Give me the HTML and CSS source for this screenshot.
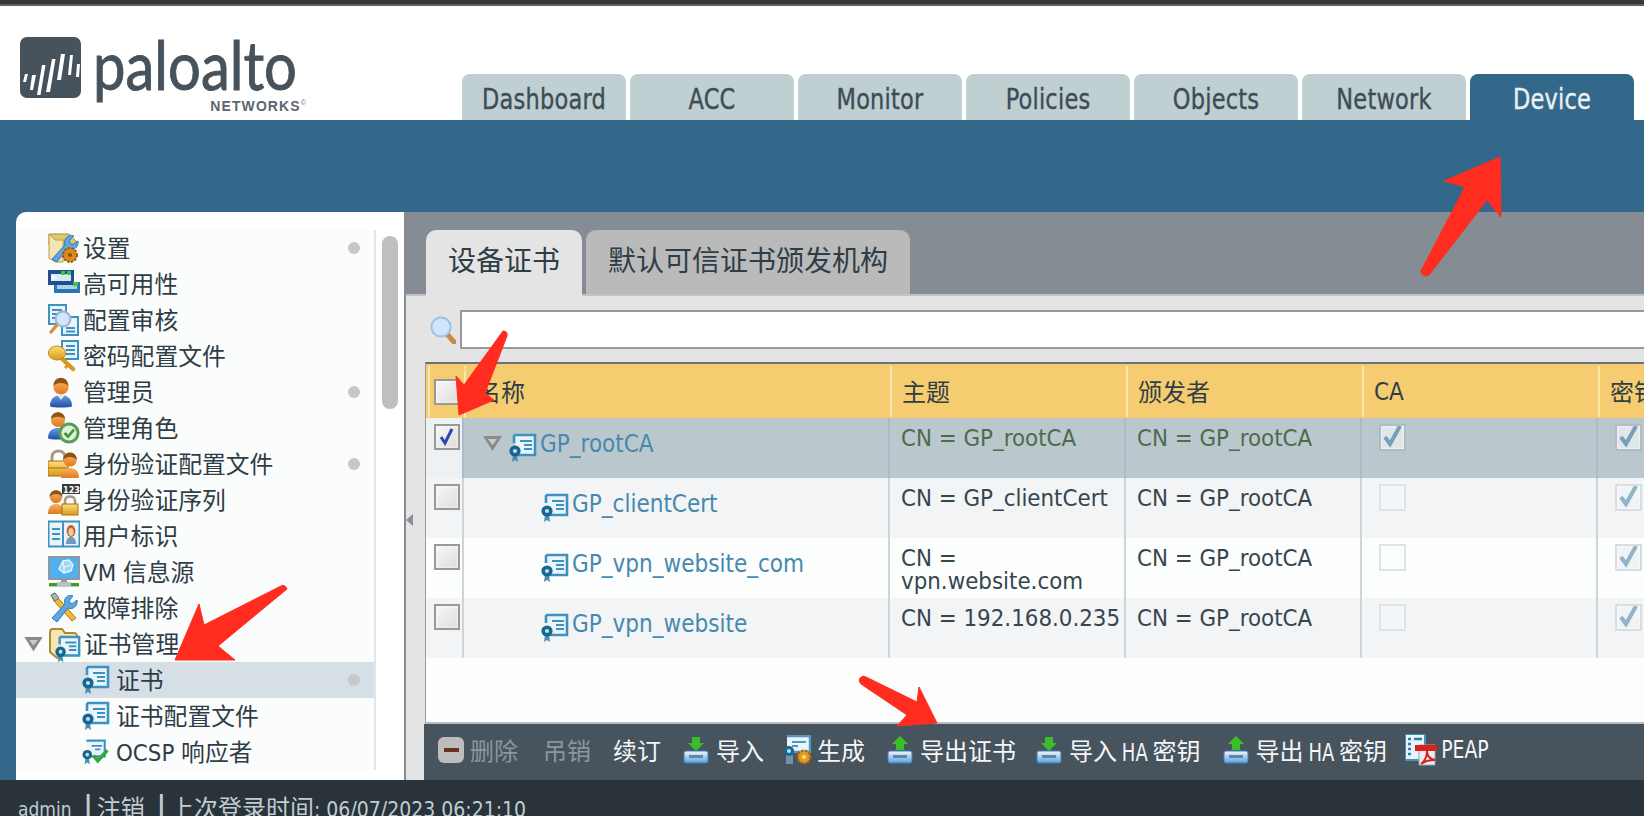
FILE: index.html
```html
<!DOCTYPE html>
<html lang="zh-CN">
<head>
    <meta charset="UTF-8">
    <title>Palo Alto Networks - Device</title>
    <link rel="stylesheet" href="styles.css">
</head>
<body>

    <!-- icon sheet -->
    <svg class="defs" width="0" height="0">
        <defs>
            <linearGradient id="gold" x1="0" y1="0" x2="0" y2="1"><stop offset="0" stop-color="#fbe07a"/><stop offset="1" stop-color="#d99a1c"/></linearGradient>
            <linearGradient id="skin" x1="0" y1="0" x2="0" y2="1"><stop offset="0" stop-color="#f7b267"/><stop offset="1" stop-color="#e07a1c"/></linearGradient>
            <linearGradient id="navy" x1="0" y1="0" x2="0" y2="1"><stop offset="0" stop-color="#6a9be0"/><stop offset="1" stop-color="#1f4fa8"/></linearGradient>
            <linearGradient id="tray" x1="0" y1="0" x2="0" y2="1"><stop offset="0" stop-color="#f4f8fc"/><stop offset="1" stop-color="#5aa0dc"/></linearGradient>
            <symbol id="i-cert" viewBox="0 0 28 30">
                <path d="M5 2h21v20H8" fill="#eaf4fa" stroke="#3d92c0" stroke-width="2.6"/>
                <path d="M5 2v8" stroke="#3d92c0" stroke-width="2.6"/>
                <path d="M11 8h12M15 12h8M15 16h8" stroke="#3d92c0" stroke-width="2.2"/>
                <path d="M4 22l-1 7 3-2 3 2-1-7z" fill="#4e8fb0"/>
                <circle cx="6" cy="18" r="5.6" fill="#17668f"/>
                <circle cx="6" cy="18" r="2.1" fill="#bfe0ef"/>
            </symbol>
            <symbol id="i-settings" viewBox="0 0 32 32">
                <path d="M1 2h20l8 8v3H1z" fill="#e2c66e" stroke="#a98b35"/>
                <path d="M1 2v24l6 4h8V8H7z" fill="#f3e6b4" stroke="#b89a46"/>
                <path d="M4 27L17 13c-2-6 3-11 9-9l-5 5 3 4 6-4c1 6-5 11-11 8L9 30z" fill="#5fa5e0" stroke="#2f78bd"/>
                <circle cx="22" cy="23" r="7" fill="#d98c1c" stroke="#96590c" stroke-width="2" stroke-dasharray="2.4 1.4"/>
                <circle cx="22" cy="23" r="2" fill="#8a4f0c"/>
            </symbol>
            <symbol id="i-ha" viewBox="0 0 32 32">
                <rect x="6" y="14" width="26" height="11" fill="#2e74b4"/>
                <rect x="9" y="17" width="20" height="4" fill="#a9d2ee"/>
                <rect x="0" y="2" width="26" height="15" fill="#1f4f90"/>
                <path d="M3 6h20v7H3z" fill="#d5e9f6"/>
                <path d="M3 6l7 3.5L3 13z" fill="#eef6fb"/>
                <rect x="13" y="3" width="4" height="4" fill="#46c43a"/>
                <rect x="19" y="3" width="4" height="4" fill="#46c43a"/>
                <rect x="25" y="14" width="5" height="4" fill="#46c43a"/>
            </symbol>
            <symbol id="i-audit" viewBox="0 0 32 32">
                <rect x="1" y="1" width="17" height="19" fill="#e8f3fa" stroke="#3d92c0" stroke-width="2"/>
                <path d="M4 6h10M4 10h6M4 14h5" stroke="#3d92c0" stroke-width="2"/>
                <rect x="14" y="13" width="16" height="18" fill="#e8f3fa" stroke="#3d92c0" stroke-width="2"/>
                <path d="M18 24h9M18 27.5h9" stroke="#3d92c0" stroke-width="2"/>
                <path d="M9 21l-6 7" stroke="#e08a3c" stroke-width="3.4" stroke-linecap="round"/>
                <circle cx="15" cy="15" r="7.4" fill="#cfe6fa" stroke="#9fb4c4" stroke-width="2"/>
            </symbol>
            <symbol id="i-keydoc" viewBox="0 0 32 32">
                <rect x="14" y="1" width="16" height="18" fill="#e8f3fa" stroke="#3d92c0" stroke-width="2"/>
                <path d="M18 6h9M18 10h9M18 14h9" stroke="#3d92c0" stroke-width="2"/>
                <path d="M12 17l13 12" stroke="#d99a1c" stroke-width="4.4" stroke-linecap="round"/>
                <path d="M20 25l-3 3" stroke="#d99a1c" stroke-width="3"/>
                <ellipse cx="9" cy="13" rx="8.6" ry="7" fill="url(#gold)" stroke="#c08a1a"/>
            </symbol>
            <symbol id="i-admin" viewBox="0 0 32 32">
                <path d="M2 30c0-9 7-11 11-11s11 2 11 11c0 2-22 2-22 0z" fill="url(#navy)"/>
                <path d="M9 19l4 5 4-5z" fill="#dcebf8"/>
                <circle cx="13" cy="11" r="7.6" fill="url(#skin)"/>
                <path d="M5.4 10c0-11 15-11 15 0-3-4-12-4-15 0z" fill="#8f5314"/>
            </symbol>
            <symbol id="i-role" viewBox="0 0 32 32">
                <path d="M0 26c0-8 6-10 10-10s10 2 10 10c0 2-20 2-20 0z" fill="url(#navy)"/>
                <circle cx="10" cy="8" r="7" fill="url(#skin)"/>
                <path d="M3 7c0-9 14-9 14 0-3-3-11-3-14 0z" fill="#8f5314"/>
                <circle cx="21" cy="21" r="10.6" fill="#5a9c55"/>
                <circle cx="21" cy="21" r="7.6" fill="#dff0d8"/>
                <path d="M16.6 21l3.4 3.6 6-7" fill="none" stroke="#3a9a38" stroke-width="2.6"/>
            </symbol>
            <symbol id="i-authp" viewBox="0 0 32 32">
                <path d="M4 13V9c0-8 13-8 13 0v4" fill="none" stroke="#a89a80" stroke-width="3"/>
                <rect x="0" y="13" width="20" height="15" fill="url(#gold)" stroke="#a86d14"/>
                <path d="M0 20h20" stroke="#a86d14"/>
                <path d="M13 30c0-8 5-10 9-10s9 2 9 10z" fill="url(#skin)"/>
                <circle cx="22" cy="12" r="6.6" fill="url(#skin)"/>
                <path d="M15 12c0-10 14-10 14 0-3-4-11-4-14 0z" fill="#8f5314"/>
            </symbol>
            <symbol id="i-auths" viewBox="0 0 32 32">
                <path d="M0 30c0-8 4-10 8-10s8 2 8 10z" fill="url(#skin)"/>
                <circle cx="8" cy="13" r="6.2" fill="url(#skin)"/>
                <path d="M1.6 13c0-9 13-9 13 0-3-4-10-4-13 0z" fill="#8f5314"/>
                <rect x="14" y="0" width="18" height="10" fill="#3a3a3a"/>
                <text class="svg-num" x="15" y="8.6">123</text>
                <path d="M17 20v-3c0-6 10-6 10 0v3" fill="none" stroke="#a89a80" stroke-width="2.6"/>
                <rect x="14" y="20" width="16" height="11" fill="url(#gold)" stroke="#a86d14"/>
            </symbol>
            <symbol id="i-userid" viewBox="0 0 32 32">
                <rect x="0.5" y="1.5" width="31" height="25" fill="#eaf3fa" stroke="#3d92c0" stroke-width="2"/>
                <path d="M15 2v24" stroke="#3d92c0" stroke-width="2"/>
                <path d="M4 9h8M4 14h8M4 19h8" stroke="#3d92c0" stroke-width="2"/>
                <path d="M18 24c0-6 3-7 5-7s5 1 5 7z" fill="#6d98c0"/>
                <ellipse cx="23" cy="11" rx="4.4" ry="6" fill="#b8672a"/>
                <ellipse cx="23" cy="12" rx="2.6" ry="4" fill="#f4c69a"/>
            </symbol>
            <symbol id="i-vm" viewBox="0 0 32 32">
                <rect x="0" y="0" width="32" height="24" fill="#8d9aa3"/>
                <rect x="2" y="2" width="28" height="20" fill="#53b0ef"/>
                <path d="M15 5l6-1 4 5-2 6-7 2-5-4z" fill="#9fd5f7" stroke="#e8f6fe" stroke-width="1.4"/>
                <path d="M15 5l1 6 7-2M16 11l0 6" fill="none" stroke="#e8f6fe" stroke-width="1.2"/>
                <rect x="13" y="24" width="6" height="3" fill="#8d9aa3"/>
                <rect x="1" y="27" width="30" height="3.4" fill="#3f9a2e"/>
                <rect x="9" y="26" width="14" height="4" fill="#b9c1c6"/>
            </symbol>
            <symbol id="i-trouble" viewBox="0 0 32 32">
                <path d="M3 3l4-2 3 5 18 20-4 3L6 9z" fill="#f0bb2e" stroke="#a97d14"/>
                <path d="M3 3l4-2 4 5-4 3z" fill="#a8b4bc" stroke="#66727a"/>
                <path d="M4 26L17 12c-2-6 3-10 8-8l-4 5 3 3 5-4c1 6-4 10-9 8L9 30z" fill="#5fa5e0" stroke="#2f78bd"/>
            </symbol>
            <symbol id="i-folder" viewBox="0 0 32 32">
                <path d="M1 24V4c0-3 2-3 3-3h9l3 4h9c3 0 3 2 3 5v3L8 30z" fill="#f4e6ae" stroke="#a98b35" stroke-width="2"/>
            </symbol>
            <symbol id="i-ocsp" viewBox="0 0 32 30">
                <path d="M5 2h21v18H8" fill="#eaf4fa" stroke="#3d92c0" stroke-width="2.4"/>
                <path d="M11 8h12M15 12h6" stroke="#3d92c0" stroke-width="2"/>
                <path d="M4 22l-1 7 3-2 3 2-1-7z" fill="#4e8fb0"/>
                <circle cx="6" cy="18" r="5.4" fill="#17668f"/>
                <circle cx="6" cy="18" r="2.1" fill="#bfe0ef"/>
                <path d="M13 19l5 6 11-12" fill="none" stroke="#35a83a" stroke-width="4"/>
            </symbol>
            <symbol id="i-import" viewBox="0 0 26 28">
                <path d="M9 1h8v6h4l-8 8-8-8h4z" fill="#3cbe28"/>
                <rect x="1" y="15" width="24" height="12" rx="2" fill="url(#tray)" stroke="#2f84c6"/>
                <rect x="6" y="19" width="14" height="3" fill="#5d86a6"/>
            </symbol>
            <symbol id="i-export" viewBox="0 0 26 28">
                <path d="M13 0l8 8h-4v6H9V8H5z" fill="#3cbe28"/>
                <rect x="1" y="15" width="24" height="12" rx="2" fill="url(#tray)" stroke="#2f84c6"/>
                <rect x="6" y="19" width="14" height="3" fill="#5d86a6"/>
            </symbol>
            <symbol id="i-gen" viewBox="0 0 30 30">
                <path d="M3 1h23v16H3" fill="#e8f3fa" stroke="#4d98c6" stroke-width="2.4"/>
                <path d="M8 7h14M8 11h6" stroke="#4d98c6" stroke-width="2"/>
                <path d="M2 20l0 9h7v-9z" fill="#6f95ac"/>
                <circle cx="5" cy="16" r="5" fill="#17668f"/>
                <circle cx="5" cy="16" r="2" fill="#bfe0ef"/>
                <circle cx="20" cy="22" r="6.4" fill="#e09c20" stroke="#a5680e" stroke-width="2.4" stroke-dasharray="2.4 1.4"/>
                <circle cx="20" cy="22" r="2" fill="#fbe07a"/>
            </symbol>
            <symbol id="i-peap" viewBox="0 0 32 32">
                <rect x="0" y="0" width="20" height="26" fill="#e8f3fa" stroke="#3d92c0" stroke-width="2"/>
                <path d="M3 5h3M3 10h3M3 15h3M3 20h3M9 5h8" stroke="#2f7db3" stroke-width="2.4"/>
                <path d="M14 11h16v20H14z" fill="#eceff1" stroke="#9aa4ac"/>
                <rect x="10" y="11" width="22" height="6" fill="#d8201e"/>
                <path d="M16 30c5-4 6-10 6-13 0 5 3 8 8 9-5 0-10 1-14 4z" fill="none" stroke="#d8201e" stroke-width="2"/>
            </symbol>
        </defs>
    </svg>

    <div class="topline"></div>

    <header class="header">
        <div class="logo">
            <svg class="logo-mark" viewBox="0 0 61 61" width="61" height="61">
                <rect width="61" height="61" rx="7" fill="#47535c"/>
                <path d="M5 37h3l-2 8H3zM12 38h4l-3 15h-3zM22 28h3.5l-5 30H17zM32 22h3.5L30 55h-4zM41 17h4l-4 26h-4zM50 18h3l-2 20h-3zM57 27h3l-1 13h-3z" fill="#fff"/>
            </svg>
            <div class="logo-text">
                <span class="logo-name">paloalto</span>
                <span class="logo-sub">NETWORKS<sup>©</sup></span>
            </div>
        </div>
        <nav class="tabs">
            <a class="tab"><span>Dashboard</span></a>
            <a class="tab"><span>ACC</span></a>
            <a class="tab"><span>Monitor</span></a>
            <a class="tab"><span>Policies</span></a>
            <a class="tab"><span>Objects</span></a>
            <a class="tab"><span>Network</span></a>
            <a class="tab active"><span>Device</span></a>
        </nav>
    </header>

    <div class="band"></div>

    <div class="workspace">
        <aside class="sidebar">
            <div class="tree">
                <div class="node"><svg class="ico"><use href="#i-settings"/></svg><span>设置</span><i class="dot"></i></div>
                <div class="node"><svg class="ico"><use href="#i-ha"/></svg><span>高可用性</span></div>
                <div class="node"><svg class="ico"><use href="#i-audit"/></svg><span>配置审核</span></div>
                <div class="node"><svg class="ico"><use href="#i-keydoc"/></svg><span>密码配置文件</span></div>
                <div class="node"><svg class="ico"><use href="#i-admin"/></svg><span>管理员</span><i class="dot"></i></div>
                <div class="node"><svg class="ico"><use href="#i-role"/></svg><span>管理角色</span></div>
                <div class="node"><svg class="ico"><use href="#i-authp"/></svg><span>身份验证配置文件</span><i class="dot"></i></div>
                <div class="node"><svg class="ico"><use href="#i-auths"/></svg><span>身份验证序列</span></div>
                <div class="node"><svg class="ico"><use href="#i-userid"/></svg><span>用户标识</span></div>
                <div class="node"><svg class="ico"><use href="#i-vm"/></svg><span>VM 信息源</span></div>
                <div class="node"><svg class="ico"><use href="#i-trouble"/></svg><span>故障排除</span></div>
                <div class="node open">
                    <b class="arrow-down"></b>
                    <div class="folder-ico">
                        <svg class="ico"><use href="#i-folder"/></svg>
                        <svg class="ico-over"><use href="#i-cert"/></svg>
                    </div>
                    <span>证书管理</span>
                </div>
                <div class="node child current"><svg class="ico-sm"><use href="#i-cert"/></svg><span>证书</span><i class="dot"></i></div>
                <div class="node child"><svg class="ico-sm"><use href="#i-cert"/></svg><span>证书配置文件</span></div>
                <div class="node child"><svg class="ico-sm"><use href="#i-ocsp"/></svg><span>OCSP 响应者</span></div>
            </div>
            <div class="scroll"><div class="thumb"></div></div>
        </aside>

        <main class="main">
            <b class="collapse"></b>
            <div class="subtabs">
                <a class="subtab active">设备证书</a>
                <a class="subtab">默认可信证书颁发机构</a>
            </div>
            <div class="content">
                <div class="search">
                    <svg class="search-ico" viewBox="0 0 26 28" width="26" height="28">
                        <path d="M17 18l7 8" stroke="#c98a4a" stroke-width="5" stroke-linecap="round"/>
                        <circle cx="11" cy="11" r="9.6" fill="#cfe6fa" stroke="#9fc3e4" stroke-width="2"/>
                    </svg>
                    <input class="search-input" type="text">
                </div>

                <div class="grid-wrap">
                    <div class="row head">
                        <div class="th"><span class="cb"></span></div>
                        <div class="th name-th">名称</div>
                        <div class="th">主题</div>
                        <div class="th">颁发者</div>
                        <div class="th latin">CA</div>
                        <div class="th">密钥</div>
                    </div>

                    <div class="row selected">
                        <div class="td check"><span class="cb on">
                            <svg viewBox="0 0 22 22"><path d="M5 11l4 6 7-14" fill="none" stroke="#2f45b0" stroke-width="3"/></svg>
                        </span></div>
                        <div class="td name top">
                            <b class="arrow-down"></b>
                            <svg class="ico-sm"><use href="#i-cert"/></svg>
                            <a>GP_rootCA</a>
                        </div>
                        <div class="td">CN = GP_rootCA</div>
                        <div class="td">CN = GP_rootCA</div>
                        <div class="td flag"><span class="cb ro"><svg viewBox="0 0 22 22"><path d="M4 11l5 7 10-18" fill="none" stroke="#74a0ba" stroke-width="4"/></svg></span></div>
                        <div class="td flag"><span class="cb ro"><svg viewBox="0 0 22 22"><path d="M4 11l5 7 10-18" fill="none" stroke="#74a0ba" stroke-width="4"/></svg></span></div>
                    </div>

                    <div class="row alt">
                        <div class="td check"><span class="cb"></span></div>
                        <div class="td name leaf"><svg class="ico-sm"><use href="#i-cert"/></svg><a>GP_clientCert</a></div>
                        <div class="td">CN = GP_clientCert</div>
                        <div class="td">CN = GP_rootCA</div>
                        <div class="td flag"><span class="cb ro off"></span></div>
                        <div class="td flag"><span class="cb ro"><svg viewBox="0 0 22 22"><path d="M4 11l5 7 10-18" fill="none" stroke="#8fb3c8" stroke-width="4"/></svg></span></div>
                    </div>

                    <div class="row">
                        <div class="td check"><span class="cb"></span></div>
                        <div class="td name leaf"><svg class="ico-sm"><use href="#i-cert"/></svg><a>GP_vpn_website_com</a></div>
                        <div class="td">CN = vpn.website.com</div>
                        <div class="td">CN = GP_rootCA</div>
                        <div class="td flag"><span class="cb ro off"></span></div>
                        <div class="td flag"><span class="cb ro"><svg viewBox="0 0 22 22"><path d="M4 11l5 7 10-18" fill="none" stroke="#8fb3c8" stroke-width="4"/></svg></span></div>
                    </div>

                    <div class="row alt">
                        <div class="td check"><span class="cb"></span></div>
                        <div class="td name leaf"><svg class="ico-sm"><use href="#i-cert"/></svg><a>GP_vpn_website</a></div>
                        <div class="td">CN = 192.168.0.235</div>
                        <div class="td">CN = GP_rootCA</div>
                        <div class="td flag"><span class="cb ro off"></span></div>
                        <div class="td flag"><span class="cb ro"><svg viewBox="0 0 22 22"><path d="M4 11l5 7 10-18" fill="none" stroke="#8fb3c8" stroke-width="4"/></svg></span></div>
                    </div>
                </div>

                <div class="toolbar">
                    <a class="tool off"><span class="minus"><i></i></span><span>删除</span></a>
                    <a class="tool off revoke"><span>吊销</span></a>
                    <a class="tool"><span>续订</span></a>
                    <a class="tool"><svg class="tool-ico"><use href="#i-import"/></svg><span>导入</span></a>
                    <a class="tool gen"><svg class="tool-gen"><use href="#i-gen"/></svg><span>生成</span></a>
                    <a class="tool"><svg class="tool-ico"><use href="#i-export"/></svg><span>导出证书</span></a>
                    <a class="tool ha-tool"><svg class="tool-ico"><use href="#i-import"/></svg><span class="ha">导入 <small>HA</small> 密钥</span></a>
                    <a class="tool"><svg class="tool-ico"><use href="#i-export"/></svg><span class="ha">导出 <small>HA</small> 密钥</span></a>
                    <a class="tool peap-tool"><svg class="tool-peap"><use href="#i-peap"/></svg><small class="peap">PEAP</small></a>
                </div>
            </div>
        </main>
    </div>

    <footer class="footer">
        <span class="who">admin</span><em>|</em><span>注销</span><em>|</em><span>上次登录时间<small>: 06/07/2023 06:21:10</small></span>
    </footer>

    <!-- red marks drawn over the screenshot -->
    <svg class="marks" viewBox="0 0 1644 816" width="1644" height="816">
        <g fill="#ff2c1f" stroke="#ff2c1f" stroke-width="1" stroke-linejoin="round">
            <path d="M281 586Q285 584 287 589L218 646 235 660 175 660 199 604 204 625z"/>
            <path d="M1500 157L1501 217 1487 200 1429 275Q1422 278 1421 271L1465 187 1444 181z"/>
            <path d="M503 331Q508 331 507 336L485 393 494 400 459 415 456 376 464 385z"/>
            <path d="M860 678Q863 675 866 677L917 702 919 687 937 723 897 726 907 715 861 684Q858 681 860 678z"/>
        </g>
    </svg>

</body>
</html>
```

FILE: styles.css
```css
/* Reset */
* {
    margin: 0;
    padding: 0;
    box-sizing: border-box;
}

body {
    position: relative;
    width: 1644px;
    height: 816px;
    overflow: hidden;
    background-color: #fff;
    color: #2f3d46;
    font-family: "DejaVu Sans Condensed", "DejaVu Sans", "Noto Sans CJK SC", sans-serif;
    font-stretch: condensed;
    font-size: 24px;
}

.defs {
    position: absolute;
}

.svg-num {
    font-size: 9px;
    font-weight: bold;
    fill: #fff;
}

.topline {
    height: 6px;
    background-color: #35373b;
    border-bottom: 2px solid #5d5f63;
}

/* Header */
.header {
    display: flex;
    justify-content: space-between;
    align-items: flex-end;
    height: 114px;
    padding-right: 10px;
}

.logo {
    display: flex;
    align-self: flex-start;
    gap: 12px;
    padding: 31px 0 0 20px;
}

.logo-text {
    display: flex;
    flex-direction: column;
    width: 214px;
}

.logo-name {
    height: 58px;
    margin-top: -4px;
    color: #47535c;
    font-family: "Lato", sans-serif;
    font-size: 58px;
    line-height: 62px;
    font-stretch: normal;
    -webkit-text-stroke: 0.8px #47535c;
    transform: scaleY(1.18);
    transform-origin: 0 50%;
}

.logo-sub {
    height: 14px;
    margin-top: 8px;
    color: #5b666e;
    font-family: "Liberation Sans", sans-serif;
    font-size: 14px;
    font-weight: bold;
    line-height: 14px;
    letter-spacing: 1.1px;
    text-align: right;
}

.logo-sub sup {
    font-size: 7px;
    font-weight: normal;
    line-height: 0;
}

.tabs {
    display: flex;
    gap: 4px;
}

.tab {
    display: flex;
    justify-content: center;
    align-items: center;
    width: 164px;
    height: 46px;
    padding-top: 5px;
    background-color: #bfcfd2;
    border-radius: 8px 8px 0 0;
    color: #3d4c55;
    font-size: 25px;
    letter-spacing: 0.2px;
    -webkit-text-stroke: 0.3px;
}

.tab span {
    transform: scaleY(1.14);
}

.tab.active {
    background-color: #33688a;
    color: #e9f1f4;
}

.band {
    height: 92px;
    background-color: #33688a;
}

/* Page body */
.workspace {
    display: flex;
    height: 568px;
    padding-left: 16px;
    background-color: #33688a;
}

.sidebar {
    display: flex;
    width: 388px;
    padding: 18px 0 10px;
    background-color: #fff;
    border-radius: 10px 0 0 0;
}

.tree {
    width: 360px;
    background-color: #fbfcfc;
    border-right: 2px solid #e4e4e4;
}

.node {
    display: flex;
    align-items: center;
    height: 36px;
    padding: 0 14px 0 32px;
    color: #2f3d46;
    font-size: 23.8px;
}

.node span {
    padding-bottom: 4px;
}

.node .ico {
    flex: none;
    width: 32px;
    height: 32px;
    margin-right: 3px;
}

.node.open {
    padding-left: 8px;
}

.node.open .arrow-down {
    margin-right: 6px;
}

.folder-ico {
    position: relative;
    width: 32px;
    height: 32px;
    margin-right: 3px;
}

.ico-over {
    position: absolute;
    left: 6px;
    top: 7px;
    width: 26px;
    height: 28px;
}

.node.child {
    padding-left: 66px;
}

.node.child .ico-sm {
    margin-right: 6px;
}

.ico-sm {
    flex: none;
    width: 28px;
    height: 30px;
    margin-right: 7px;
}

.node.current {
    background-color: #d6dfe6;
}

.dot {
    width: 12px;
    height: 12px;
    margin-left: auto;
    background-color: #c8c8c8;
    border-radius: 50%;
}

.arrow-down {
    position: relative;
    display: block;
    flex: none;
    width: 19px;
    height: 15px;
    background-color: #8a8a8a;
    clip-path: polygon(0 0, 100% 0, 50% 100%);
}

.arrow-down::after {
    content: "";
    position: absolute;
    left: 5px;
    top: 3px;
    width: 9px;
    height: 6px;
    background-color: #c9cdd0;
    clip-path: polygon(0 0, 100% 0, 50% 100%);
}

.scroll {
    flex: 1;
    padding: 6px 6px 0;
}

.thumb {
    width: 16px;
    height: 173px;
    background-color: #bfbfbf;
    border-radius: 8px;
}

/* Main panel */
.main {
    position: relative;
    display: flex;
    flex-direction: column;
    flex: 1;
    min-width: 0;
    border-left: 2px solid #858c93;
}

.collapse {
    position: absolute;
    left: 0;
    top: 302px;
    width: 7px;
    height: 12px;
    background-color: #8a8f94;
    clip-path: polygon(100% 0, 100% 100%, 0 50%);
}

.subtabs {
    display: flex;
    gap: 4px;
    height: 82px;
    padding: 18px 0 0 20px;
    background-color: #858c93;
}

.subtab {
    height: 64px;
    padding: 0 22px;
    background-color: #bababa;
    border-radius: 10px 10px 0 0;
    color: #2f3d46;
    font-size: 28px;
    line-height: 64px;
}

.subtab.active {
    position: relative;
    height: 66px;
    background-color: #e4e4e4;
}

.content {
    display: flex;
    flex-direction: column;
    flex: 1;
    min-height: 0;
    padding: 14px 0 0 18px;
    background-color: #e4e4e4;
    border-top: 2px solid #c3c3c3;
}

.search {
    display: flex;
    align-items: center;
    gap: 4px;
    height: 39px;
    margin: 0 -4px 13px 0;
    padding-left: 6px;
}

.search-ico {
    flex: none;
}

.search-input {
    flex: 1;
    height: 39px;
    background-color: #fff;
    border: 2px solid #999;
}

/* Certificate grid */
.grid-wrap {
    height: 362px;
    margin-left: 1px;
    overflow: hidden;
    background-color: #fcfdfd;
    border-top: 2px solid #6a737a;
    border-left: 1px solid #9a9a9a;
    border-bottom: 2px solid #b8bcc2;
}

.row {
    display: grid;
    grid-template-columns: 38px 426px repeat(4, 236px);
    height: 60px;
    background-color: #fcfdfd;
    color: #37454e;
}

.row.alt {
    background-color: #f2f4f6;
}

.row.selected {
    background-color: #bac8cd;
    color: #4f6a4d;
}

.row.head {
    grid-template-columns: 36px 426px repeat(4, 236px);
    height: 54px;
    padding-left: 2px;
    background-color: #f5cd70;
    color: #2f3d46;
}

.th {
    display: flex;
    align-items: center;
    margin: 2px 0 1px;
    padding: 0 0 3px 10px;
    border-left: 2px solid #fbe6ac;
}

.th.latin {
    padding-bottom: 0;
}

.th:first-child {
    padding: 0 0 0 4px;
}

.name-th {
    padding-left: 11px;
}

.td {
    padding: 9px 0 0 11px;
    border-right: 2px solid #d0d4d8;
    font-size: 23.8px;
    line-height: 23px;
}

.selected .td {
    border-right-color: #a9bccb;
}

.td.check {
    padding: 6px 0 0 8px;
}

.selected .td.check {
    background-color: #eef1f4;
}

.td.name {
    display: flex;
    align-items: flex-start;
    padding-top: 15px;
    color: #4689ad;
    font-size: 24px;
}

.td.name a {
    margin: 0 0 0 -4px;
}

.td.name.top {
    padding-left: 19px;
}

.td.name.top .arrow-down {
    margin: 3px 7px 0 0;
}

.td.name.leaf {
    padding-left: 77px;
}

.td.flag {
    padding: 6px 0 0 17px;
}

/* Checkboxes */
.cb {
    display: block;
    width: 26px;
    height: 26px;
    background: linear-gradient(135deg, #f8f8f8, #dcdcdc);
    border: 2px solid #999;
    box-shadow: inset 0 0 3px #fff;
}

.cb svg {
    display: block;
    width: 22px;
    height: 22px;
}

.cb.ro {
    width: 27px;
    height: 27px;
    background: #f0f3f5;
    border-color: #d8dde0;
}

.selected .cb.ro {
    background: #e1e6e9;
    border-color: #b0bcc2;
}

.cb.ro.off {
    background: transparent;
    border-color: #e0e3e5;
}

/* Bottom action bar */
.toolbar {
    display: flex;
    align-items: center;
    gap: 22px;
    height: 56px;
    padding: 0 0 5px 14px;
    background-color: #47535d;
}

.tool {
    display: flex;
    align-items: center;
    flex: none;
    color: #f4f6f7;
    white-space: pre;
}

.tool.off {
    color: #8d969d;
}

.tool.revoke {
    margin-left: 3px;
}

.tool.gen {
    margin-left: -2px;
}

.tool.ha-tool {
    margin-left: -2px;
}

.tool .ha {
    word-spacing: -2px;
}

.tool small {
    display: inline-block;
    font-size: 20px;
    transform: scaleY(1.2);
}

.tool .peap {
    font-size: 21px;
    transform: scaleY(1.14);
}

.tool.peap-tool {
    margin-left: -4px;
}

.minus {
    display: flex;
    justify-content: center;
    align-items: center;
    width: 26px;
    height: 26px;
    margin-right: 6px;
    background-color: #bdbdbd;
    border-radius: 6px;
}

.minus i {
    width: 15px;
    height: 4px;
    background-color: #6e2f22;
}

.tool-ico {
    width: 26px;
    height: 28px;
    margin-right: 7px;
}

.tool-gen {
    width: 30px;
    height: 30px;
    margin-right: 3px;
}

.tool-peap {
    width: 32px;
    height: 32px;
    margin-right: 4px;
}

/* Footer */
.footer {
    display: flex;
    height: 36px;
    padding: 14px 0 0 18px;
    overflow: hidden;
    background-color: #293339;
    color: #c0cdd3;
    line-height: 30px;
    white-space: nowrap;
}

.footer em {
    margin: 0 4px 0 12px;
    font-style: normal;
    font-size: 28px;
    font-weight: bold;
    line-height: 26px;
}

.footer .who {
    font-size: 19px;
}

.footer small {
    font-size: 21px;
}

/* Annotations */
.marks {
    position: absolute;
    left: 0;
    top: 0;
    pointer-events: none;
}
```
